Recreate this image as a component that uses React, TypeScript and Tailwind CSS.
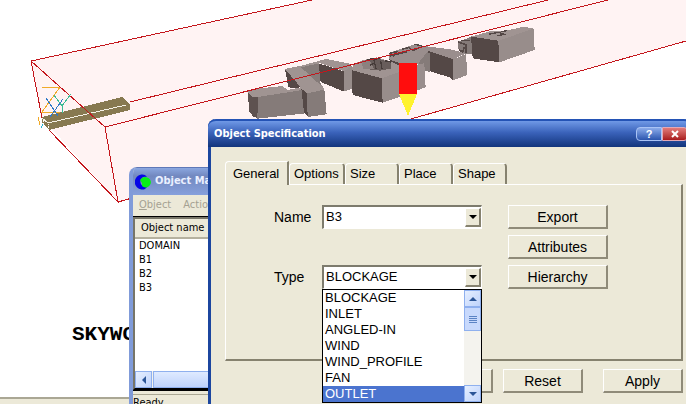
import type { ReactNode } from "react";

const tabs = [
  { name: "Options", width: "w-[56px]" },
  { name: "Size", width: "w-[54px]" },
  { name: "Place", width: "w-[54px]" },
  { name: "Shape", width: "w-[54px]" },
];

const objects = ["DOMAIN", "B1", "B2", "B3"];

const types = ["BLOCKAGE", "INLET", "ANGLED-IN", "WIND", "WIND_PROFILE", "FAN", "OUTLET"];

const Triangle = ({ dir, className = "" }: { dir: "up" | "down" | "left"; className?: string }) => {
  const points = { up: "0,6 4,2 8,6", down: "0,2 8,2 4,6", left: "6,0 2,4 6,8" };
  return (
    <svg viewBox="0 0 8 8" className={`size-2 ${className}`} fill="currentColor" aria-hidden="true">
      <polygon points={points[dir]} />
    </svg>
  );
};

const Button = ({ children, className = "" }: { children?: ReactNode; className?: string }) => (
  <button
    type="button"
    className={`h-6 border-t border-l border-r-2 border-b-2 border-t-white border-l-white border-r-[#8f8b79] border-b-[#8f8b79] bg-[#ece9d8] text-sm leading-5 ${className}`}
  >
    {children}
  </button>
);

const ScrollButton = ({ dir }: { dir: "up" | "down" | "left" }) => (
  <button
    type="button"
    aria-label={dir}
    className="flex size-[17px] shrink-0 items-center justify-center border border-[#8fb0ee] bg-linear-to-br from-[#e6efff] to-[#bfd3fb] text-[#2b5597]"
  >
    <Triangle dir={dir} />
  </button>
);

const sunken = "border-t-2 border-l-2 border-r border-b border-t-[#7d7b6d] border-l-[#7d7b6d] border-r-white border-b-white bg-white";

const DropButton = () => (
  <span className="my-px flex w-4 shrink-0 items-center justify-center border-t border-l border-r-2 border-b-2 border-t-white border-l-white border-r-[#86826f] border-b-[#86826f] bg-[#ece9d8]">
    <Triangle dir="down" />
  </span>
);

const Scene = () => (
  <svg
    viewBox="0 0 686 404"
    preserveAspectRatio="xMinYMin slice"
    className="absolute inset-0 h-full w-full"
    shapeRendering="crispEdges"
    aria-hidden="true"
  >
    <polygon points="31,61 312,0 686,0 686,41 118,202 42,118" fill="#fff3f3" />

    {/* inlet slab */}
    <polygon points="42,117 122,97 130,104 130,110 49,130 42,123" fill="#877950" />
    <path d="M42 118 L48 123 L126 105" stroke="#f6f2e6" fill="none" />
    <path d="M43 120 V124 L48 129 V124" stroke="#fff" fill="none" strokeDasharray="2 1" />

    {/* buildings, drawn on a grid three times finer */}
    <g transform="translate(220 0) scale(0.33333)">
      <polygon points="508,158 545,146 585,132 612,138 690,148 738,160 700,178 624,156 606,190 540,196 508,178" fill="#9a8e8d" />
      <polygon points="508,178 540,190 540,215 524,200" fill="#544846" />
      <polygon points="624,152 700,178 700,241 688,232 650,220 624,212" fill="#544846" />
      <polygon points="596,188 622,156 630,160 630,216 614,212" fill="#857b79" />
      <polygon points="590,194 613,190 617,262 590,272" fill="#9a8e8d" />
      <polygon points="700,178 738,162 742,225 700,241" fill="#988d8b" />
      <path d="M508 160 L530 155 L520 170 M545 148 L566 143 L580 152 L600 142 M510 168 L560 156 M584 132 L610 140" stroke="#544846" strokeWidth="4" fill="none" />

      <polygon points="713,125 745,114 756,108 758,160 738,163 715,148" fill="#857b79" />
      <path d="M714 126 L738 134 L738 160 M722 122 L750 122 M734 140 L728 156 L716 148" stroke="#544846" strokeWidth="5" fill="none" />

      <polygon points="753,110 810,94 860,92 910,80 940,85 900,102 835,122" fill="#a09492" />
      <polygon points="753,110 835,122 838,187 758,175" fill="#544846" />
      <polygon points="835,122 941,86 944,150 838,187" fill="#988d8b" />
      <path d="M806 103 L836 97 L852 103 L830 108 M842 96 L860 92" stroke="#544846" strokeWidth="4" fill="none" />

      <polygon points="393,210 402,192 430,180 470,172 512,184 540,198 540,215 485,235" fill="#a09492" />
      <polygon points="424,184 470,174 512,188 512,206 480,212 430,206" fill="#685d5b" />
      <polygon points="424,184 448,180 462,208 430,206" fill="#8c817f" />
      <path d="M440 178 L480 176 M462 180 L468 206 M482 182 L486 208 M450 196 L462 190 M494 182 L512 186" stroke="#453b39" strokeWidth="4" fill="none" />
      <polygon points="393,210 485,235 488,308 398,285" fill="#544846" />
      <polygon points="485,235 540,215 540,290 488,308" fill="#988d8b" />

      <polygon points="195,207 248,196 318,177 386,190 396,200 372,214 300,190 243,202 308,258 313,270 262,282 240,262" fill="#a09492" />
      <polygon points="195,207 242,262 222,264 205,262" fill="#544846" />
      <polygon points="243,202 298,190 302,256" fill="#857b79" />
      <polygon points="296,190 372,214 372,275 302,246" fill="#544846" />
      <polygon points="372,214 396,198 397,266 372,275" fill="#988d8b" />

      <polygon points="83,275 112,266 188,258 202,270 243,262 250,272 118,292 98,292" fill="#a09492" />
      <polygon points="83,276 98,292 118,291 118,355 100,350 88,335" fill="#5e5250" />
      <polygon points="114,291 248,270 258,340 112,356" fill="#857b79" />
      <polygon points="244,266 262,280 264,350 252,338" fill="#544846" />
      <polygon points="261,280 313,269 320,343 263,351" fill="#857b79" />
    </g>

    {/* domain edges */}
    <g stroke="#c4161c" fill="none">
      <path d="M312 0 L31 61 L105 127 L118 202 L49 130" />
      <path d="M31 61 L42 118 M130 102 L548 0" />
      <path d="M105 127 L608 0 M118 202 L686 41" />
    </g>

    {/* axis letters */}
    <path d="M42 87 H60 L42 112 H60 M38 117 L40 125" stroke="#f0aa28" fill="none" />
    <path d="M46 98 L58 116 M63 99 L50 117" stroke="#2e78c8" fill="none" />
    <path d="M54 95 L62 106 L71 94 M62 106 V113" stroke="#3cbc94" fill="none" />
    <path d="M43 124 L41 128" stroke="#28b4d2" fill="none" />

    <rect x="399" y="63" width="18" height="31" fill="#ff0d0d" />
    <polygon points="399,94 417,94 408,116" fill="#fff22e" />
  </svg>
);

const ObjectManager = () => (
  <section className="absolute top-[167px] -bottom-2.5 left-[129px] flex w-24 flex-col overflow-hidden rounded-t-lg border-x-4 border-[#809bd9] bg-[#ece9d8] font-['DejaVu_Sans_Condensed','DejaVu_Sans',sans-serif] text-[11px] [font-stretch:condensed]">
    <header className="flex h-7 shrink-0 items-center gap-1 border-t border-[#5f78b8] bg-linear-to-b from-[#8ba7e0] via-[#7288bf] via-30% to-[#86a0dc] pl-0.5 font-bold text-[#eaf0ff]">
      <svg viewBox="0 0 16 16" className="size-4 shrink-0" aria-hidden="true">
        <path d="M10 1 A7.5 7.5 0 1 0 10 15 L13 12 A5 5 0 1 1 12 3 Z" fill="#0505e6" />
        <path d="M16 8 A5.5 6 0 0 1 7 12 A7 7 0 0 0 5 6 A6 6 0 0 1 16 8 Z" fill="#08f018" />
      </svg>
      <h2 className="whitespace-nowrap">Object Manager</h2>
    </header>
    <nav className="flex h-5 shrink-0 items-center gap-3 px-1.5 text-[#a5a192]">
      <button type="button"><u>O</u>bject</button>
      <button type="button">Action</button>
    </nav>
    <div className="mt-0.5 flex flex-1 flex-col border-2 border-[#777568] border-b-black bg-white outline outline-black">
      <table className="w-full text-left">
        <thead>
          <tr>
            <th className="h-[19px] border-b-2 border-[#b5b19f] bg-[#ece9d8] px-1.5 font-normal whitespace-nowrap">Object name</th>
          </tr>
        </thead>
        <tbody>
          {objects.map((name) => (
            <tr key={name}>
              <td className="h-3.5 px-1 leading-[14px]">{name}</td>
            </tr>
          ))}
        </tbody>
      </table>
      <div className="mt-auto flex bg-[#f3f2ec]">
        <ScrollButton dir="left" />
        <div className="ml-px flex-1 border border-[#8fb0ee] bg-linear-to-b from-[#dfeaff] to-[#bfd3fb]" />
      </div>
    </div>
    <footer className="mt-1 h-5 shrink-0 border-t border-[#aaa794] leading-4">Ready</footer>
  </section>
);

const TypeList = () => (
  <div className="absolute top-full left-0 z-10 flex w-full border border-black bg-white text-[13px]">
    <ul role="listbox" aria-labelledby="type-label" className="flex-1">
      {types.map((type) => (
        <li
          key={type}
          role="option"
          aria-selected={type === "OUTLET"}
          className="h-4 px-0.5 leading-4 aria-selected:bg-[#4b74cf] aria-selected:text-white"
        >
          {type}
        </li>
      ))}
    </ul>
    <div className="flex flex-col bg-[#f4f3ee]">
      <ScrollButton dir="up" />
      <div className="flex h-6 flex-col items-center justify-center gap-px border border-[#8fb0ee] bg-[#c8d9fc]">
        <i className="h-px w-2 bg-[#5b83c4]" />
        <i className="h-px w-2 bg-[#5b83c4]" />
        <i className="h-px w-2 bg-[#5b83c4]" />
        <i className="h-px w-2 bg-[#5b83c4]" />
      </div>
      <div className="mt-auto">
        <ScrollButton dir="down" />
      </div>
    </div>
  </div>
);

const ObjectSpecification = () => (
  <section className="absolute top-[119px] -right-1.5 -bottom-4 left-[208px] rounded-t-lg border-x-3 border-[#1c469f] bg-[#ece9d8]">
    <header className="-mx-[3px] flex h-7 items-center rounded-t-lg border-t-2 border-[#2453b5] bg-linear-to-b from-[#7099e6] via-[#3a62ba] via-45% to-[#12357c] pr-1 pl-1.5 text-white">
      <h1 className="flex-1 font-['DejaVu_Sans_Condensed','DejaVu_Sans',sans-serif] text-[11px] font-bold [font-stretch:condensed]">
        Object Specification
      </h1>
      <button type="button" className="h-3.5 w-[26px] rounded-l-sm border border-[#a9c3f5] bg-linear-to-b from-[#8babea] to-[#2c55ae] text-[11px] leading-3 font-bold">
        ?
      </button>
      <button type="button" aria-label="Close" className="flex h-3.5 w-[26px] items-center justify-center rounded-r-sm border border-[#e3a9b5] bg-linear-to-b from-[#e27a7a] to-[#a8171c]">
        <svg viewBox="0 0 8 8" className="size-2" stroke="#fff" strokeWidth="2" aria-hidden="true">
          <path d="M1 1 L7 7 M7 1 L1 7" />
        </svg>
      </button>
    </header>

    <div className="pt-3.5 pr-1.5 pl-3.5">
      <div role="tablist" className="flex items-end text-[13px]">
        <button
          type="button"
          role="tab"
          aria-selected="true"
          className="relative -mb-px h-6 w-16 rounded-tl-sm border-t border-l border-r-2 border-t-white border-l-white border-r-[#86826f] bg-[#ece9d8] pl-[7px] text-left"
        >
          General
        </button>
        {tabs.map((tab) => (
          <button
            key={tab.name}
            type="button"
            role="tab"
            aria-selected="false"
            className={`h-[21px] rounded-t-sm border-t border-l border-r-2 border-t-white border-l-white border-r-[#86826f] pl-1 text-left ${tab.width}`}
          >
            {tab.name}
          </button>
        ))}
      </div>

      <div role="tabpanel" className="h-[177px] border-t border-l border-r-2 border-b-2 border-t-white border-l-white border-r-[#86826f] border-b-[#86826f] pt-5 pl-12">
        <div className="grid grid-cols-[48px_160px_100px] grid-rows-[24px_24px_24px] gap-y-1.5 text-sm">
          <label htmlFor="name" className="leading-6">Name</label>
          <div className={`flex ${sunken}`}>
            <input id="name" defaultValue="B3" className="w-0 flex-1 px-0.5 text-[13px] outline-none" />
            <DropButton />
          </div>
          <Button className="ml-[26px] w-[100px]">Export</Button>

          <Button className="col-start-3 ml-[26px] w-[100px]">Attributes</Button>

          <label id="type-label" htmlFor="type" className="leading-6">Type</label>
          <div className="relative">
            <div className={`flex h-6 ${sunken}`}>
              <select id="type" defaultValue="BLOCKAGE" className="w-0 flex-1 appearance-none px-0.5 text-[13px] outline-none">
                <option>BLOCKAGE</option>
              </select>
              <DropButton />
            </div>
            <TypeList />
          </div>
          <Button className="ml-[26px] w-[100px]">Hierarchy</Button>
        </div>
      </div>

      <div className="mt-2 flex justify-end gap-5">
        <div className="flex gap-2.5">
          <Button className="w-20">Cancel</Button>
          <Button className="w-20">Reset</Button>
        </div>
        <Button className="w-20">Apply</Button>
      </div>
    </div>
  </section>
);

const App = () => (
  <main className="relative flex h-screen flex-col overflow-hidden bg-white font-['Liberation_Sans',Arial,sans-serif] text-black">
    <Scene />
    <p className="relative mt-auto mb-[50px] ml-[72px] font-['Liberation_Mono',monospace] text-[21px] leading-6 font-bold">SKYWO</p>
    <footer className="relative h-[7px] border-t-2 border-[#aaa794] bg-[#ece9d8]" />
    <ObjectManager />
    <ObjectSpecification />
  </main>
);

export default App;
